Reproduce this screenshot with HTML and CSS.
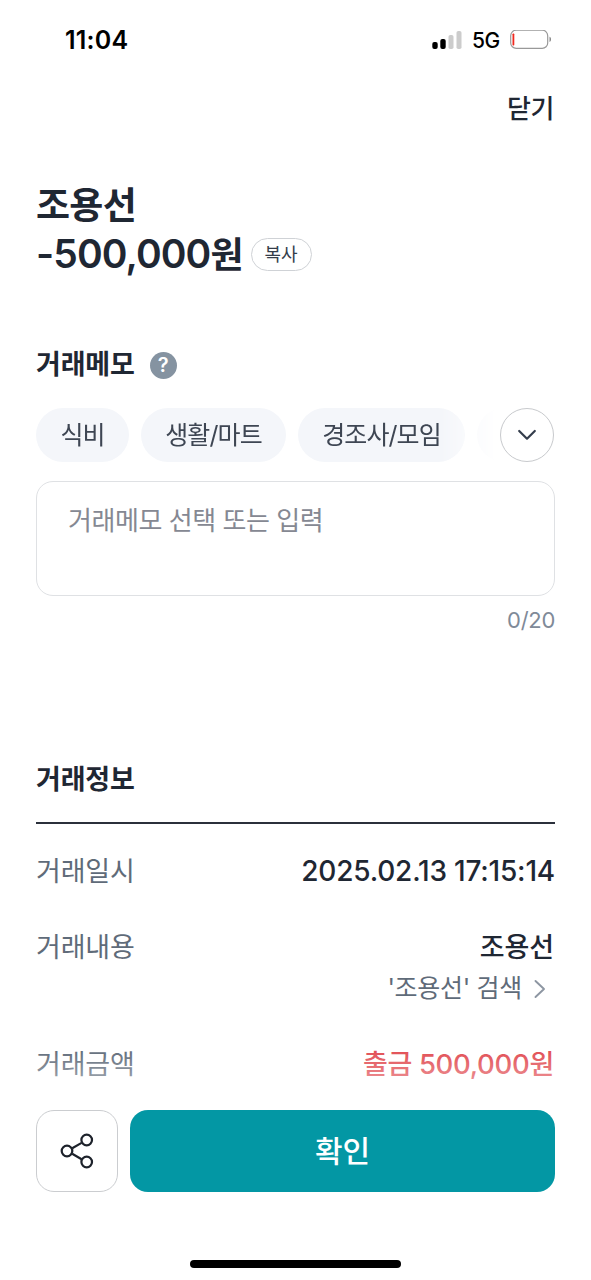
FILE: index.html
```html
<!DOCTYPE html>
<html lang="ko">
<head>
<meta charset="utf-8">
<title>거래 상세</title>
<link rel="stylesheet" href="styles.css">
</head>
<body>
<div class="screen">
  <header class="status">
    <span class="time">11:04</span>
    <div class="indicators">
      <svg class="signal" width="31" height="20" viewBox="0 0 31 20">
        <rect x="0.300" y="12" width="5.400" height="7" rx="2" fill="#000"/>
        <rect x="8.300" y="9" width="5.400" height="10" rx="2" fill="#000"/>
        <rect x="16.500" y="5" width="5" height="14" rx="1.800" fill="#ccc"/>
        <rect x="24.500" y="1" width="5" height="18" rx="1.800" fill="#ccc"/>
      </svg>
      <span class="network">5G</span>
      <svg class="battery" width="42" height="20" viewBox="0 0 42 20">
        <rect x="0.700" y="0.200" width="37" height="18.200" rx="5.500" fill="none" stroke="#999" stroke-width="1.200"/>
        <rect x="2.500" y="3.500" width="1.800" height="12" rx="0.700" fill="#f0291f"/>
        <path d="M39.500 6.700v5.200c2-.6 2-4.600 0-5.200z" fill="#888"/>
      </svg>
    </div>
  </header>

  <nav class="topbar"><button class="close">닫기</button></nav>

  <section class="summary">
    <h1 class="name">조용선</h1>
    <div class="amount-row">
      <span class="amount">-500,000<span class="won">원</span></span>
      <button class="copy">복사</button>
    </div>
  </section>

  <section class="memo">
    <div class="memo-head">
      <h2 class="heading">거래메모</h2>
      <span class="help">?</span>
    </div>
    <div class="chips-row">
      <div class="chips">
        <span class="chip chip-food">식비</span>
        <span class="chip chip-living">생활/마트</span>
        <span class="chip chip-event">경조사/모임</span>
        <span class="chip chip-next"></span>
      </div>
      <button class="expand">
        <svg width="20" height="14" viewBox="0 0 20 14"><path d="M2.200 3l7.800 7.700L17.800 3" fill="none" stroke="#343d4c" stroke-width="2.200" stroke-linecap="round" stroke-linejoin="round"/></svg>
      </button>
    </div>
    <div class="memo-box"><span class="placeholder">거래메모 선택 또는 입력</span></div>
    <div class="counter">0/20</div>
  </section>

  <section class="info">
    <h2 class="heading">거래정보</h2>
    <dl class="rows">
      <div class="row row-date"><dt>거래일시</dt><dd class="date">2025.02.13 17:15:14</dd></div>
      <div class="row row-content">
        <dt>거래내용</dt>
        <dd class="content">
          <span class="payee">조용선</span>
          <a class="search"><span>'조용선' 검색</span>
            <svg width="12" height="20" viewBox="0 0 12 20"><path d="M1.500 2l8.500 8-8.500 8" fill="none" stroke="#8d96a2" stroke-width="1.900" stroke-linecap="round" stroke-linejoin="round"/></svg>
          </a>
        </dd>
      </div>
      <div class="row row-amount"><dt>거래금액</dt><dd class="withdraw"><span>출금</span> <span class="number">500,000</span><span>원</span></dd></div>
    </dl>
  </section>

  <footer class="bottom">
    <div class="fade"></div>
    <div class="actions">
      <button class="share">
        <svg width="34" height="36" viewBox="0 0 34 36" fill="none" stroke="#1d222b" stroke-width="2.200"><path d="M12.200 15.200l9.400-5.300M12.200 20.800l9.400 5.400"/><circle cx="7" cy="18" r="5.300"/><circle cx="26.700" cy="7" r="5.300"/><circle cx="26.700" cy="29" r="5.300"/></svg>
      </button>
      <button class="confirm">확인</button>
    </div>
    <div class="home"></div>
  </footer>
</div>
</body>
</html>
```
FILE: styles.css
```css
* { box-sizing: border-box; margin: 0; padding: 0; }
body { background: #fff; color: #1f2733; font-family: Inter, "Noto Sans CJK KR", sans-serif; }
button { border: 0; background: none; color: inherit; font-family: inherit; }
svg { display: block; flex: none; }
.screen { position: relative; width: 591px; height: 1280px; overflow: hidden; }

.status { display: flex; justify-content: space-between; align-items: center; height: 80px; padding: 0 39px 0 65px; color: #000; }
.time { font-size: 25px; font-weight: 600; letter-spacing: 0.2px; line-height: 30px; margin-top: -1px; }
.indicators { display: flex; align-items: center; }
.network { margin: 0 10px 0 9px; font-size: 21px; font-weight: 500; letter-spacing: -0.3px; }

.topbar { display: flex; justify-content: flex-end; padding: 1px 37px 0 0; height: 56px; }
.close { font-size: 26px; font-weight: 500; line-height: 54px; letter-spacing: -0.4px; }

.summary { padding: 45px 37px 0; }
.name { font-size: 37px; font-weight: 600; line-height: 49px; letter-spacing: -0.7px; margin-left: -1px; }
.amount-row { display: flex; align-items: center; gap: 8px; height: 48px; }
.amount { margin-left: -1px; font-size: 39px; font-weight: 600; line-height: 49px; letter-spacing: -0.900px; }
.won { font-size: 36px; }
.copy { width: 61px; height: 33px; border: 1.500px solid #cfd2d6; border-radius: 17px; font-size: 18px; line-height: 31px; color: #343d4a; }

.memo { padding: 66px 36px 0; }
.memo-head { display: flex; align-items: center; gap: 15px; height: 42px; }
.heading { font-size: 27px; font-weight: 600; line-height: 44px; letter-spacing: -0.2px; }
.help { display: flex; align-items: center; justify-content: center; width: 27px; height: 27px; border-radius: 50%; background: #8593a1; color: #fff; font-size: 20px; font-weight: 600; }
.chips-row { display: flex; margin-top: 22px; height: 54px; }
.chips { display: flex; gap: 12px; width: 464px; overflow: hidden; -webkit-mask-image: linear-gradient(to right, #000 405px, rgba(0,0,0,0.35) 440px, transparent 460px); mask-image: linear-gradient(to right, #000 405px, rgba(0,0,0,0.35) 440px, transparent 460px); }
.chip { flex: none; height: 54px; border-radius: 27px; background: #f4f6fa; color: #3e4653; font-size: 25px; line-height: 54px; text-align: center; letter-spacing: -0.9px; }
.chip-food { width: 93px; }
.chip-living { width: 145px; }
.chip-event { width: 167px; }
.chip-next { width: 100px; }
.expand { display: flex; align-items: center; justify-content: center; width: 54px; height: 54px; border: 1.500px solid #c8cacd; border-radius: 50%; }
.memo-box { margin-top: 19px; height: 115px; padding: 18px 31px; border: 1.500px solid #dfe1e4; border-radius: 17px; }
.placeholder { font-size: 26px; line-height: 42px; color: #858892; letter-spacing: -0.45px; }
.counter { margin-top: 8px; text-align: right; font-size: 22px; line-height: 32px; color: #808a98; letter-spacing: -0.3px; }

.info { padding: 122px 36px 0; }
.rows { margin-top: 20px; border-top: 2px solid #2b303b; padding-top: 28px; }
.row { display: flex; justify-content: space-between; font-size: 27px; line-height: 40px; }
dt { color: #5f6b79; letter-spacing: -0.2px; }
.row-content { margin-top: 36px; }
.date { font-size: 28px; font-weight: 500; letter-spacing: -0.2px; line-height: 39px; }
.content { display: flex; flex-direction: column; align-items: flex-end; }
.payee { font-weight: 500; letter-spacing: -0.1px; margin-right: 1px; }
.search { display: flex; align-items: center; gap: 12px; padding-right: 9px; color: #5f6b79; font-size: 25px; line-height: 41px; letter-spacing: -0.3px; }
.row-amount { margin-top: 36px; }
.withdraw { color: #e14b51; font-weight: 500; letter-spacing: -0.3px; margin-right: 1px; }
.number { font-size: 27.5px; line-height: 38px; }

.bottom { position: absolute; left: 0; right: 0; bottom: 0; height: 232px; }
.fade { height: 62px; background: linear-gradient(rgba(255,255,255,0), rgba(255,255,255,0.35) 50%, #fff 90%); }
.actions { display: flex; gap: 12px; height: 82px; padding: 0 36px; background: #fff; }
.share { display: flex; align-items: center; justify-content: center; width: 82px; border: 1.500px solid #cbcdd0; border-radius: 18px; background: #fff; }
.confirm { flex: 1; border-radius: 18px; background: #0397a4; color: #fff; font-size: 30px; font-weight: 500; line-height: 80px; }
.home { width: 211px; height: 8px; margin: 68px auto 0 190px; border-radius: 4px; background: #000; }
```
